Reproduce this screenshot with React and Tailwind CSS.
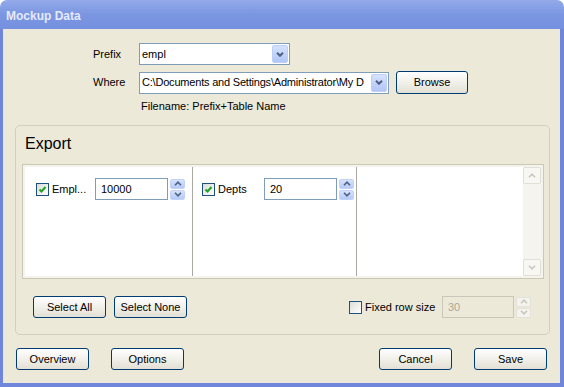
import React from 'react'

const Chevron = ({ up, color = '#4d6185', w = 2 }) => (
  <svg width="8" height="5" viewBox="0 0 8 5">
    <path d={up ? 'M1 4.2 L4 1.2 L7 4.2' : 'M1 0.8 L4 3.8 L7 0.8'} fill="none" stroke={color} strokeWidth={w} />
  </svg>
)

function Combo({ value, width, tight }) {
  return (
    <div className={`flex h-[22px] items-center border border-[#7f9db9] bg-white ${width}`}>
      <span className={`flex-1 overflow-hidden whitespace-nowrap pl-[2px] ${tight ? 'tracking-[-0.2px]' : ''}`}>{value}</span>
      <div className="m-[1px] flex h-[18px] w-[16px] shrink-0 items-center justify-center rounded-[2px] border border-[#bcd0f7] bg-gradient-to-b from-[#d6e2fd] to-[#b1c6f6]">
        <Chevron />
      </div>
    </div>
  )
}

function Spinner({ disabled }) {
  const cls = disabled
    ? 'flex flex-1 items-center justify-center rounded-[2px] border border-[#e4e2d8] bg-[#f4f3ee]'
    : 'flex flex-1 items-center justify-center rounded-[2px] border border-[#c3d3f8] bg-gradient-to-b from-[#d6e2fd] to-[#b6caf6]'
  const c = disabled ? '#c9c7bc' : '#4d6185'
  return (
    <div className="flex h-[21px] w-[15px] flex-col gap-[1px]">
      <div className={cls}><Chevron up color={c} w={1.6} /></div>
      <div className={cls}><Chevron color={c} w={1.6} /></div>
    </div>
  )
}

function Check({ checked }) {
  return (
    <div className="flex h-[13px] w-[13px] shrink-0 items-center justify-center border border-[#1c5180] bg-gradient-to-br from-[#dcdcd7] to-white">
      {checked && (
        <svg width="9" height="9" viewBox="0 0 9 9">
          <path d="M1.5 4.5 L3.5 6.5 L7.5 2" stroke="#21a121" strokeWidth="2" fill="none" />
        </svg>
      )}
    </div>
  )
}

function Btn({ children }) {
  return (
    <div className="flex h-[22px] w-[73px] items-center justify-center rounded-[3px] border border-[#003c74] bg-gradient-to-b from-white to-[#e3e1d5]">
      {children}
    </div>
  )
}

function Column({ width, pad, labelW, label, value }) {
  return (
    <div className={`flex items-start pt-[11px] ${width} ${pad}`}>
      <div className="flex items-center">
        <Check checked />
        <span className={`pl-[3px] ${labelW}`}>{label}</span>
        <div className="flex h-[22px] w-[73px] items-center border border-[#7f9db9] bg-white pl-[5px]">{value}</div>
        <div className="ml-[2px]"><Spinner /></div>
      </div>
    </div>
  )
}

export default function App() {
  return (
    <div className="flex h-[387px] w-[564px] flex-col overflow-hidden rounded-t-[7px] font-['Liberation_Sans',Arial,sans-serif] text-[11px] leading-[13px] text-black">
      {/* Title bar */}
      <div className="flex h-[29px] items-center bg-gradient-to-b from-[#93aaea] via-[#7b96e1] to-[#7590df] pl-[6px] pt-[3px]">
        <span className="text-[12px] font-bold text-[#e4eafc]">Mockup Data</span>
      </div>

      <div className="flex flex-1 flex-col border-b-[4px] border-l-[3px] border-r-[4px] border-[#6f86da] bg-[#ece9d8]">
        {/* Prefix */}
        <div className="mt-[14px] flex items-center pl-[90px]">
          <span className="w-[46px]">Prefix</span>
          <Combo value="empl" width="w-[151px]" />
        </div>
        {/* Where */}
        <div className="mt-[6px] flex items-center pl-[90px]">
          <span className="w-[46px]">Where</span>
          <Combo value="C:\Documents and Settings\Administrator\My D" width="w-[250px]" tight />
          <div className="ml-[7px] flex h-[23px] w-[72px] items-center justify-center rounded-[3px] border border-[#003c74] bg-gradient-to-b from-white to-[#e3e1d5]">Browse</div>
        </div>
        <div className="mt-[6px] pl-[138px]">Filename: Prefix+Table Name</div>

        {/* Export group */}
        <div className="ml-[12px] mt-[12px] flex h-[210px] w-[535px] flex-col rounded-[5px] border border-[#d0d0bf] pl-[6px] pr-[5px]">
          <div className="pl-[3px] pt-[8px] text-[16px] leading-[20px]">Export</div>
          <div className="mt-[10px] h-[115px] border border-[#cbc8b5] bg-[#f4f3ec] p-[2px]">
            <div className="flex h-full bg-white">
              <Column width="w-[167px]" pad="pl-[11px]" labelW="w-[46px]" label="Empl..." value="10000" />
              <div className="w-px bg-[#a9a8a2]" />
              <Column width="w-[163px]" pad="pl-[9px]" labelW="w-[49px]" label="Depts" value="20" />
              <div className="w-px bg-[#a9a8a2]" />
              <div className="flex-1" />
              <div className="flex w-[18px] flex-col justify-between bg-[#f5f4ef]">
                <div className="flex h-[17px] items-center justify-center rounded-[2px] border border-[#e2e0d6] bg-[#f8f7f3]"><Chevron up color="#c9c7bc" w={1.6} /></div>
                <div className="flex h-[17px] items-center justify-center rounded-[2px] border border-[#e2e0d6] bg-[#f8f7f3]"><Chevron color="#c9c7bc" w={1.6} /></div>
              </div>
            </div>
          </div>
          <div className="mt-[17px] flex items-center justify-between pl-[11px] pr-[13px]">
            <div className="flex gap-[8px]">
              <Btn>Select All</Btn>
              <div className="flex h-[22px] w-[73px] items-center justify-center rounded-[3px] border border-[#003c74] bg-gradient-to-b from-white to-[#e3e1d5]">Select None</div>
            </div>
            <div className="flex items-center">
              <Check />
              <span className="w-[80px] pl-[3px]">Fixed row size</span>
              <div className="flex h-[22px] w-[72px] items-center border border-[#c9c7ba] bg-[#ece9d8] pl-[5px] text-[#aca899]">30</div>
              <div className="ml-[2px]"><Spinner disabled /></div>
            </div>
          </div>
        </div>

        {/* Bottom buttons */}
        <div className="mt-[13px] flex items-center justify-between px-[13px]">
          <div className="flex gap-[22px]">
            <Btn>Overview</Btn>
            <Btn>Options</Btn>
          </div>
          <div className="flex gap-[22px]">
            <Btn>Cancel</Btn>
            <Btn>Save</Btn>
          </div>
        </div>
      </div>
    </div>
  )
}
